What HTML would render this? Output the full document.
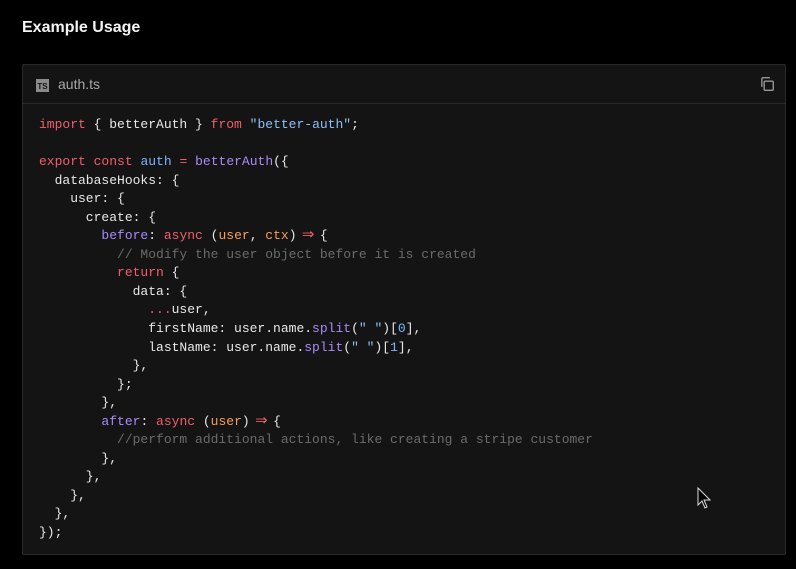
<!DOCTYPE html>
<html><head><meta charset="utf-8"><style>
body{margin:0;background:#000;width:796px;height:569px;overflow:hidden;font-family:"Liberation Sans",sans-serif}
h2{position:absolute;left:22px;top:19px;margin:0;font-size:16px;font-weight:bold;color:#f4f4f4}
.box{position:absolute;left:22px;top:64px;width:762px;height:489px;border:1px solid #2a2a2a;background:#141414;border-radius:2px}
.hd{height:38px;border-bottom:1px solid #2a2a2a;position:relative}
.ts{position:absolute;left:13px;top:14px;width:13px;height:13px;background:#8a8a8a;color:#141414;font-size:8px;font-weight:bold;line-height:15px;text-align:center}
.fn{position:absolute;left:35px;top:11px;color:#a8a8a8;font-size:14px}
.cp{position:absolute;right:10px;top:11px}
pre{margin:0;position:absolute;left:16px;top:51px;font-family:"Liberation Mono",monospace;font-size:13px;line-height:18.55px;color:#e8e8e8}
.k{color:#f25d6d}.s{color:#8fbff8}.f{color:#a78bfa}.v{color:#7cb3ff}.p{color:#f59e5b}.c{color:#6b6b6b}.n{color:#79b8ff}
.a{color:#f25d6d;display:inline-block;width:23.4px;text-align:center;font-family:"DejaVu Sans",sans-serif;font-size:15px;line-height:10px}
</style></head><body>
<h2>Example Usage</h2>
<div class="box">
<div class="hd"><div class="ts">TS</div><div class="fn">auth.ts</div>
<svg class="cp" width="16" height="16" viewBox="0 0 14 14" fill="none" stroke="#999" stroke-width="1.2"><rect x="4.5" y="4.5" width="8" height="8" rx="1"/><path d="M2.5 9.5V2.5a1 1 0 0 1 1-1h6"/></svg></div>
<pre><span class="k">import</span> { betterAuth } <span class="k">from</span> <span class="s">"better-auth"</span>;

<span class="k">export</span> <span class="k">const</span> <span class="v">auth</span> <span class="k">=</span> <span class="f">betterAuth</span>({
  databaseHooks: {
    user: {
      create: {
        <span class="f">before</span>: <span class="k">async</span> (<span class="p">user</span>, <span class="p">ctx</span>)<span class="a">⇒</span>{
          <span class="c">// Modify the user object before it is created</span>
          <span class="k">return</span> {
            data: {
              <span class="k">...</span>user,
              firstName: user.name.<span class="f">split</span>(<span class="s">" "</span>)[<span class="n">0</span>],
              lastName: user.name.<span class="f">split</span>(<span class="s">" "</span>)[<span class="n">1</span>],
            },
          };
        },
        <span class="f">after</span>: <span class="k">async</span> (<span class="p">user</span>)<span class="a">⇒</span>{
          <span class="c">//perform additional actions, like creating a stripe customer</span>
        },
      },
    },
  },
});</pre>
</div>
<svg style="position:absolute;left:697px;top:487px" width="14" height="24" viewBox="0 0 14 24"><path d="M1 1v17l4-4 3 7 2-1-3-7h6z" fill="#000" stroke="#ddd" stroke-width="1"/></svg>
</body></html>
